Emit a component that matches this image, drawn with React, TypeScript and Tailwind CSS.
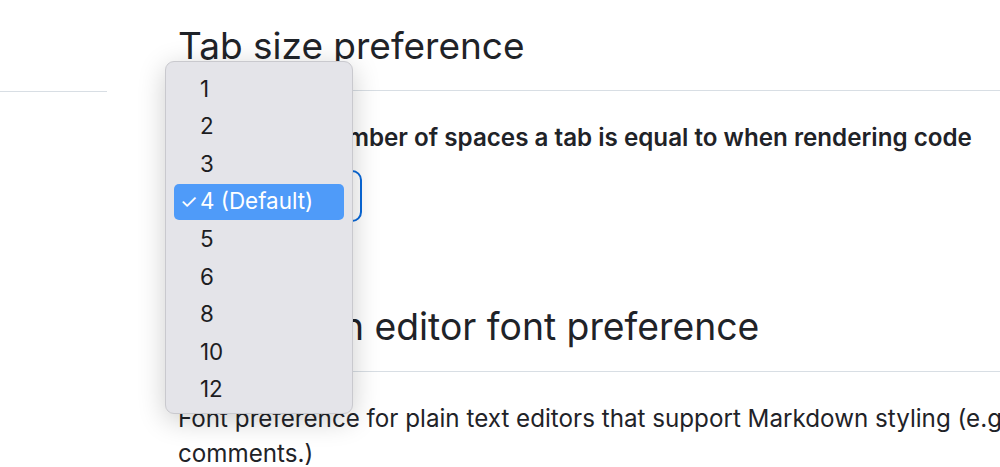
import React from 'react'

const options = ['1', '2', '3', '4 (Default)', '5', '6', '8', '10', '12']

export default function App() {
  const selected = '4 (Default)'

  return (
    <div
      className="relative h-[467px] w-[1000px] overflow-hidden bg-white text-[#1f2328]"
      style={{ fontFamily: 'Inter, "Liberation Sans", Arial, sans-serif' }}
    >
      <div className="flex">
        {/* Sidebar stub */}
        <div className="w-[107px] shrink-0 pt-[91px]">
          <div className="h-px bg-[#d8dee4]" />
        </div>

        {/* Main settings column */}
        <div className="ml-[71px] w-[1300px] shrink-0 pt-[21px]">
          <h2 className="border-b border-[#d8dee4] pb-[19px] text-[37px] leading-[50px] font-normal">
            Tab size preference
          </h2>
          <p className="mt-[30px] text-[24.2px] leading-[34px] font-semibold">
            Choose the number of spaces a tab is equal to when rendering code
          </p>
          <div className="mt-[15px] h-[52px] w-[184px] rounded-[10px] border-2 border-[#0969da]" />

          <h2 className="mt-[80px] border-b border-[#d8dee4] pb-[19px] text-[37.3px] leading-[50px] font-normal">
            Markdown editor font preference
          </h2>
          <p className="mt-[29px] text-[24.2px] leading-[35px]">
            <span className="block whitespace-nowrap">
              Font preference for plain text editors that support Markdown styling (e.g. pull request and issue descriptions,
            </span>
            <span className="block whitespace-nowrap">comments.)</span>
          </p>
        </div>
      </div>

      {/* Open select menu */}
      <div className="absolute left-[165px] top-[61px] w-[188px] rounded-[9px] border border-[#c9c9ce] bg-[#e4e4e9] px-[8px] pb-[5px] pt-[8px] shadow-[0_6px_28px_rgba(0,0,0,0.2)]">
        {options.map((opt) => {
          const active = opt === selected
          return (
            <div key={opt} className="flex h-[37.6px] items-center">
              <div
                className={
                  active
                    ? 'flex h-[36px] w-full items-center rounded-[5px] bg-[#4f9bf9] text-white'
                    : 'flex h-[36px] w-full items-center text-[#1d1d1f]'
                }
              >
                <span className="w-[26px] pl-[6px] text-[20px] leading-none">{active ? '✓' : ''}</span>
                <span className="text-[22.4px] leading-none">{opt}</span>
              </div>
            </div>
          )
        })}
      </div>
    </div>
  )
}
